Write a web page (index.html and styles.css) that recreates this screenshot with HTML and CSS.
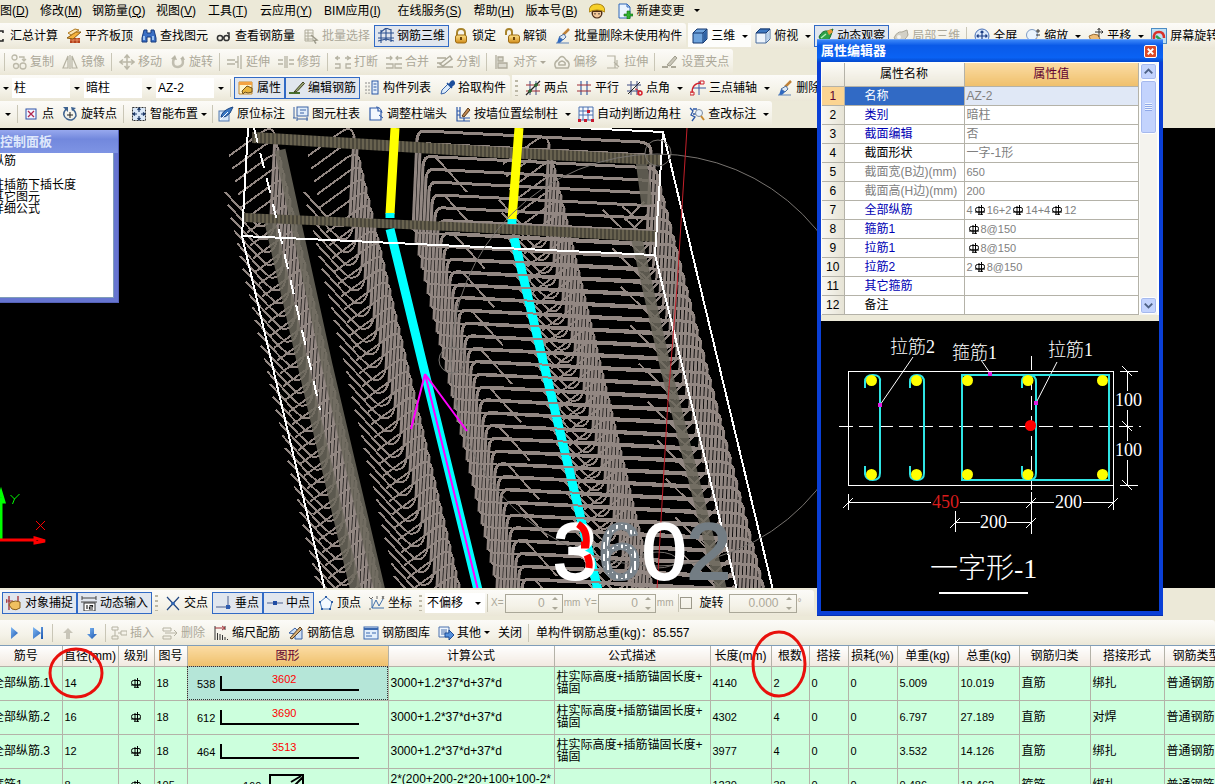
FILE: index.html
```html
<!DOCTYPE html>
<html lang="zh-CN">
<head>
    <meta charset="UTF-8">
    <meta name="viewport" content="width=device-width, initial-scale=1.0">
    <title>钢筋三维</title>
    <link rel="stylesheet" href="styles.css">
</head>
<body>
    <!-- icon sprite -->
    <svg class="sprite" aria-hidden="true">
        <defs>
            <linearGradient id="gold" x1="0" y1="0" x2="0" y2="1"><stop offset="0" stop-color="#ffe48a"/><stop offset="1" stop-color="#d08a18"/></linearGradient>
            <linearGradient id="blue" x1="0" y1="0" x2="1" y2="1"><stop offset="0" stop-color="#7fb8f4"/><stop offset="1" stop-color="#1c57b0"/></linearGradient>
        </defs>
        <symbol id="i-sum" viewBox="0 0 16 16"><path d="M12 5V3H4l4 5-4 5h8v-2" fill="none" stroke="#222" stroke-width="1.5"/></symbol>
        <symbol id="i-slab" viewBox="0 0 16 16"><path d="M4 10h10v5H4z" fill="#b5421c"/><path d="M7 10v5M11 10v5M4 12h10" stroke="#f0a070" stroke-width=".8"/><path d="M1 10l9-6 5 0-8 7z" fill="#f7b23c" stroke="#8a5a10"/><path d="M2 5l7-4 4 1-8 5z" fill="#fbe3b0" stroke="#b07a20"/></symbol>
        <symbol id="i-binoc" viewBox="0 0 16 16"><path d="M3 2h3v3h4V2h3l2 8v4h-5V9H6v5H1v-4z" fill="#3a6fc4" stroke="#163a7c"/><path d="M3 8v4M12 8v4" stroke="#bfe0ff" stroke-width="1.5"/></symbol>
        <symbol id="i-glasses" viewBox="0 0 16 16"><g fill="none" stroke="#333" stroke-width="1.5"><circle cx="4" cy="10" r="2.6"/><circle cx="10.500" cy="10" r="2.600"/><path d="M13 10V5h-2M6.500 9.500h1.500"/></g></symbol>
        <symbol id="i-batch" viewBox="0 0 16 16"><path d="M2 2h8v11H2zM2 5h8M2 8h8M2 11h8M5 2v11" fill="none" stroke="#b0ad9c"/><path d="M8 7l6 5-3 .500 2 3" fill="none" stroke="#9c9989" stroke-width="1.500"/></symbol>
        <symbol id="i-cage" viewBox="0 0 16 16"><path d="M0 5h16M0 10h16M3 2v13M8 0v13M13 1v13M0 13l8-2 8 2M3 4l5-4 5 2" fill="none" stroke="#2a4f8f" stroke-width="1.100"/></symbol>
        <symbol id="i-lock" viewBox="0 0 16 16"><path d="M4 8V5q0-4 4-4t4 4v3" fill="none" stroke="#a8842c" stroke-width="2"/><rect x="2.500" y="7" width="11" height="8" rx="2" fill="url(#gold)" stroke="#9c6a12"/><path d="M8 9v3" stroke="#6a4208" stroke-width="2"/></symbol>
        <symbol id="i-unlock" viewBox="0 0 16 16"><path d="M2 7V4q0-3 3-3t3 3v3" fill="none" stroke="#a8842c" stroke-width="2"/><rect x="4.500" y="7" width="11" height="8" rx="2" fill="url(#gold)" stroke="#9c6a12"/><path d="M10 9v3" stroke="#6a4208" stroke-width="2"/></symbol>
        <symbol id="i-brush" viewBox="0 0 16 16"><path d="M14 1L8 7" stroke="#c08238" stroke-width="2.500"/><path d="M9 6l2 3-3 3-4-3z" fill="#dce8f6" stroke="#50709c"/><path d="M4 9l4 3-3 3H2z" fill="#2f69c0"/><path d="M1 15h13" stroke="#5c83b8"/></symbol>
        <symbol id="i-cube" viewBox="0 0 16 16"><path d="M1 5l4-4h10v10l-4 4H1z" fill="#6fa4dc" stroke="#14376e"/><path d="M1 5h10v10M11 5l4-4" fill="none" stroke="#14376e"/><path d="M11.500 5.500L14.500 2v9l-3 3z" fill="#2f62a4"/></symbol>
        <symbol id="i-cubetop" viewBox="0 0 16 16"><path d="M1 5l4-4h10v10l-4 4H1z" fill="#eef4fb" stroke="#4a6f9f"/><path d="M1 5l4-4h10l-4 4z" fill="#3e78c0" stroke="#14376e"/><path d="M11 5v10" stroke="#4a6f9f"/><path d="M11.500 5.500l3-3v8l-3 3z" fill="#b8d0ea"/></symbol>
        <symbol id="i-orbit" viewBox="0 0 16 16"><path d="M1 9q3-7 9-6l5-2-2 6q-2 7-9 7z" fill="#2da048" stroke="#176c2a"/><path d="M9 3l4-2 2 3-4 3z" fill="#e89538"/><path d="M3 10l5-4" stroke="#b4f0b8" stroke-width="1.500"/></symbol>
        <symbol id="i-orbitoff" viewBox="0 0 16 16"><path d="M1 10q3-7 8-6l5-2 1 5q-3 6-9 7z" fill="#d2d0c6" stroke="#aaa798"/><circle cx="6" cy="9" r="2" fill="#f4f3ee"/></symbol>
        <symbol id="i-full" viewBox="0 0 16 16"><circle cx="8" cy="8" r="7" fill="#dbe8fa" stroke="#4a72b8"/><path d="M8 3v10M3 8h10M6.500 4.500L8 3l1.500 1.500M6.500 11.500L8 13l1.500-1.500M4.500 6.500L3 8l1.500 1.500M11.500 6.500L13 8l-1.500 1.500" fill="none" stroke="#1d3f86" stroke-width="1.200"/></symbol>
        <symbol id="i-zoom" viewBox="0 0 16 16"><circle cx="7" cy="7" r="5.500" fill="#eaf3fc" stroke="#7f9cc4"/><path d="M11 11l4 4" stroke="#c89040" stroke-width="2"/><path d="M11 3h4M13 1v4M11 7h4" stroke="#333"/></symbol>
        <symbol id="i-pan" viewBox="0 0 16 16"><path d="M1 8q5-3 9-1l2 4q-4 4-9 2z" fill="#eebd78" stroke="#9a6a30"/><path d="M11 0v9M7 4h8M9.500 2L11 .500 12.500 2M13.500 2.500L15 4l-1.500 1.500" fill="none" stroke="#333"/></symbol>
        <symbol id="i-screen" viewBox="0 0 16 16"><rect x=".5" y=".5" width="15" height="15" fill="#bfe0f4" stroke="#4c8cc4"/><path d="M3 11q-1-7 5-7 5 0 5 6" fill="none" stroke="#d8322a" stroke-width="2.500"/><path d="M5 8l6 5" stroke="#2ca04c" stroke-width="2.500"/></symbol>
        <symbol id="i-copy" viewBox="0 0 16 16"><g fill="none" stroke="#bcb9a9" stroke-width="1.300"><circle cx="3.500" cy="3.500" r="2.500"/><circle cx="5" cy="12" r="2.500"/><circle cx="12" cy="12" r="3"/><path d="M8 3h5v4M11 5l2 2 2-2"/></g></symbol>
        <symbol id="i-mirror" viewBox="0 0 16 16"><path d="M6 2v12H1zM10 2v12h5zM8 1v14" fill="none" stroke="#b5b2a2" stroke-width="1.200"/></symbol>
        <symbol id="i-move" viewBox="0 0 16 16"><path d="M8 1v14M1 8h14M5.500 4L8 1l2.500 3M5.500 12L8 15l2.500-3M4 5.500L1 8l3 2.500M12 5.500L15 8l-3 2.500" fill="none" stroke="#bab7a7" stroke-width="1.500"/></symbol>
        <symbol id="i-rotate" viewBox="0 0 16 16"><path d="M4 4q-3 9 4 9 7-1 4-9" fill="none" stroke="#c1beb0" stroke-width="2.500"/><path d="M1 5l4-4 2 5zM10 5l3-3 2 4z" fill="#b8b5a6"/></symbol>
        <symbol id="i-extend" viewBox="0 0 16 16"><path d="M0 6h8M0 10h8M11 2v12M14 1v14M8 8h3" stroke="#b5b2a2" stroke-width="1.300"/></symbol>
        <symbol id="i-trim" viewBox="0 0 16 16"><path d="M0 6h5M0 10h5M11 6h5M11 10h5M7 2v12M9 2v12" stroke="#b5b2a2" stroke-width="1.300"/></symbol>
        <symbol id="i-break" viewBox="0 0 16 16"><path d="M0 4h5M10 4h6M3 2L1 4l2 2M12 2l3 2-3 2M0 10h5v4H0M16 10h-5v4h5" fill="none" stroke="#b5b2a2" stroke-width="1.300"/></symbol>
        <symbol id="i-merge" viewBox="0 0 16 16"><path d="M0 4h6M10 4h6M4 2l2 2-2 2M12 2l-2 2 2 2M0 10h7v4H0M16 10H9v4h7" fill="none" stroke="#b5b2a2" stroke-width="1.300"/></symbol>
        <symbol id="i-split" viewBox="0 0 16 16"><path d="M0 4h9M0 13h16M3 10l10-8 2 3-9 7zM0 9h5" fill="none" stroke="#aeab9b" stroke-width="1.500"/></symbol>
        <symbol id="i-align" viewBox="0 0 16 16"><path d="M2 1v14M4 3h5v4H4zM4 9h9v5H4z" fill="#dddbd0" stroke="#aeab9b" stroke-width="1.300"/></symbol>
        <symbol id="i-offset" viewBox="0 0 16 16"><path d="M2 14q-3-5 2-8 4-7 8 0 5 3 2 8zM5 11q-1-3 3-4 4 1 3 4z" fill="none" stroke="#b5b2a2" stroke-width="1.500"/></symbol>
        <symbol id="i-stretch" viewBox="0 0 16 16"><path d="M2 2h8v12H2M13 14H8M12 6v6M9 8l5 5" fill="none" stroke="#b5b2a2" stroke-width="1.200"/></symbol>
        <symbol id="i-grip" viewBox="0 0 16 16"><path d="M0 13h6M9 13h5" stroke="#aaa797" stroke-width="2"/><path d="M5 11l8-9 2 2-7 8z" fill="#c9c6b8" stroke="#a09d8d"/></symbol>
        <symbol id="i-prop" viewBox="0 0 16 16"><path d="M1 2h13v12H1z" fill="#fff5cc" stroke="#c58c30"/><path d="M1 2h13v3H1z" fill="#f4a343"/><path d="M4 11l5-5 5 2v4l-4 1-3-1-2 2z" fill="#e8b43c" stroke="#70501a"/></symbol>
        <symbol id="i-pen" viewBox="0 0 16 16"><path d="M0 13h11" stroke="#4a7030" stroke-width="2"/><path d="M5 12l9-10 1.500 1.500-7.500 8z" fill="#9aa878" stroke="#40401c"/></symbol>
        <symbol id="i-list" viewBox="0 0 16 16"><path d="M2 2v12M5 2v12" stroke="#888" stroke-dasharray="2 1.500"/><rect x="8" y="1" width="6" height="13" fill="#e4eefa" stroke="#2b57a4"/><path d="M9.500 4h3M9.500 7h3M9.500 10h3" stroke="#2b57a4"/></symbol>
        <symbol id="i-dropper" viewBox="0 0 16 16"><path d="M2 14l1-4 6-6 3 3-6 6z" fill="#dcecfc" stroke="#3a64a8"/><path d="M8 3l5 5M10 5l2-3q2-2 3 0t-1 3l-2 2z" fill="#1f509c" stroke="#1f509c" stroke-width="1.500"/></symbol>
        <symbol id="i-twopt" viewBox="0 0 16 16"><path d="M5 1v14M11 1v14" stroke="#3c4a84"/><path d="M1 5h14M1 11h14" stroke="#a02c34"/><path d="M1 15L15 1" stroke="#222" stroke-width="1.200"/><path d="M5 9v4M3 11h4M11 3v4M9 5h4" stroke="#2d6a34" stroke-width="1.500"/></symbol>
        <symbol id="i-parallel" viewBox="0 0 16 16"><path d="M5 1v14M11 1v14" stroke="#3c62a4" stroke-width="1.200"/><path d="M1 5h14M1 11h14" stroke="#a02c34" stroke-width="1.200"/></symbol>
        <symbol id="i-angle" viewBox="0 0 16 16"><path d="M4 1v14M10 1v14M0 5h14M0 11h14" stroke="#3c4a84"/><path d="M1 14L13 2" stroke="#222"/><path d="M8 9q4 0 4 5" fill="none" stroke="#c8202c"/><circle cx="13" cy="13" r="2" fill="none" stroke="#d8202c" stroke-width="1.500"/></symbol>
        <symbol id="i-three" viewBox="0 0 16 16"><path d="M9 1v14M3 8h13" stroke="#3a5aa4"/><path d="M2 13Q2 3 11 3" fill="none" stroke="#d0202c" stroke-width="1.300"/><path d="M0 12h4v3H0zM10 1h4v3h-4z" fill="none" stroke="#d0202c"/></symbol>
        <symbol id="i-point" viewBox="0 0 16 16"><rect x="3" y="3" width="10" height="10" fill="#f5f7ff" stroke="#2c50a8"/><path d="M5 5l6 6M11 5l-6 6" stroke="#b02850" stroke-width="1.300"/></symbol>
        <symbol id="i-rotpt" viewBox="0 0 16 16"><path d="M4 3q-5 6 1 10 6 3 9-3 0-5-4-7" fill="none" stroke="#3d6290" stroke-width="1.500"/><path d="M1 1h5v5zM14 2l-5-1 1 4z" fill="#3d6290"/><path d="M8 6v6M5 9h6" stroke="#222"/></symbol>
        <symbol id="i-smart" viewBox="0 0 16 16"><rect x="1.500" y="1.500" width="13" height="13" fill="#dbe9f8" stroke="#333" stroke-dasharray="2 1"/><path d="M8 2v4M8 10v4M2 8h4M10 8h4M6.500 4L8 2l1.500 2M6.500 12L8 14l1.500-2M4 6.500L2 8l2 1.500M12 6.500L14 8l-2 1.500" fill="none" stroke="#1b3766" stroke-width="1.200"/></symbol>
        <symbol id="i-mark" viewBox="0 0 16 16"><rect x="1" y="5" width="10" height="10" fill="#d7e6f7" stroke="#5078b0"/><path d="M3 11q1-6 9-9l3-1-3 6q-4 5-9 4z" fill="#3a78c4" stroke="#1b4582"/><path d="M2 14l8-8" stroke="#fff"/></symbol>
        <symbol id="i-coltab" viewBox="0 0 16 16"><rect x="4" y="1" width="11" height="9" fill="#e1edfa" stroke="#3a62a4"/><path d="M7 4h6M7 7h4M1 1v11M0 12h3M4 13h11M4 11v4M14 11v4" stroke="#3a62a4"/></symbol>
        <symbol id="i-colend" viewBox="0 0 16 16"><path d="M2 2h8v3h3v9H2z" fill="#f3f7fd" stroke="#2c58a8" stroke-width="1.200"/><path d="M8 1q5 0 6 6M11 9l4 3" fill="none" stroke="#2c58a8"/></symbol>
        <symbol id="i-wall" viewBox="0 0 16 16"><path d="M2 1v14h13M5 1v11h10M2 5h3M2 9h3M9 12v3" fill="none" stroke="#2c58a8" stroke-width="1.200"/><path d="M7 10l6-8 2 2-6 7z" fill="#c08850" stroke="#5a3a18"/></symbol>
        <symbol id="i-corner" viewBox="0 0 16 16"><path d="M1 1h14v13H1zM5 1v13M10 1v13M1 5h14M1 9h14" fill="#f7f9fd" stroke="#4a70b0"/><path d="M0 13h3v3H0zM6 13h3v3H6zM13 13h3v3h-3z" fill="#c8182c"/><path d="M9 4h3v3H9z" fill="#c8182c"/></symbol>
        <symbol id="i-check" viewBox="0 0 16 16"><path d="M1 2l3 3-2 4 4 2-3 4M4 3h4M4 8h3" fill="none" stroke="#2c58a8" stroke-width="1.300"/><circle cx="10" cy="7" r="3.500" fill="#e8f2fc" stroke="#7a8aa0"/><path d="M12 10l3 4" stroke="#c88a30" stroke-width="2"/></symbol>
        <symbol id="i-worker" viewBox="0 0 16 16"><circle cx="8" cy="10" r="5.500" fill="#4c2c18"/><path d="M4 9h8v3q-4 5-8 0z" fill="#f2c79a"/><path d="M0 9q0-8 8-8t8 8q-8-4-16 0z" fill="#f6d028" stroke="#a88012"/><path d="M6 10v1.500M10 10v1.500" stroke="#222"/></symbol>
        <symbol id="i-newdoc" viewBox="0 0 16 16"><path d="M2 1h8l3 3v11H2z" fill="#eaf4ff" stroke="#2f67b8"/><path d="M10 1v3h3" fill="none" stroke="#2f67b8"/><path d="M10 8h3v3h3v2h-3v3h-3v-3H7v-2h3z" fill="#30b030" stroke="#147014" stroke-width=".6"/></symbol>
        <symbol id="i-snap" viewBox="0 0 16 16"><path d="M3 1v14M12 1v5" stroke="#a02c34" stroke-width="1.300"/><path d="M0 6h7M1 4l-1 2 1 2" stroke="#a02c34" fill="none"/><path d="M5 7q5-2 9 0v6q-4 3-8 1l-3-4z" fill="#f0c060" stroke="#8a6020"/></symbol>
        <symbol id="i-dyn" viewBox="0 0 16 16"><path d="M1 1v4M15 1v4M1 3h14M0 7h16" stroke="#444"/><rect x="3" y="8" width="11" height="8" fill="#fff" stroke="#333"/><path d="M6 10v4M8.500 10.500h3v1.500h-3v2h3.500" fill="none" stroke="#222" stroke-width="1.200"/></symbol>
        <symbol id="i-cross" viewBox="0 0 16 16"><path d="M2 2l12 13M14 2L2 15" stroke="#1f4580" stroke-width="1.200"/><circle cx="8" cy="8.500" r="1.800" fill="#2f66b4"/></symbol>
        <symbol id="i-perp" viewBox="0 0 16 16"><path d="M0 12h15M12 1v11" stroke="#4a5f8f"/><rect x="10" y="10" width="4" height="4" fill="#2f5cb0"/></symbol>
        <symbol id="i-mid" viewBox="0 0 16 16"><path d="M0 8h16" stroke="#4a5f8f"/><rect x="6" y="6" width="4" height="4" fill="#1f4ca4"/></symbol>
        <symbol id="i-vertex" viewBox="0 0 16 16"><path d="M8 2l6 5-2 7H4L2 7z" fill="#f4f9ff" stroke="#4a7cbc"/><path d="M7 1h2v2H7zM1 6h2v2H1zM13 6h2v2h-2zM3 13h2v2H3zM11 13h2v2h-2z" fill="#2c5ca4"/></symbol>
        <symbol id="i-coord" viewBox="0 0 16 16"><path d="M3 4v9h12M3 13l4-8 3 6 4-7" fill="none" stroke="#3f70ac"/><path d="M0 2l2 2 2-2M8 1v3M13 1l2 3M15 1l-2 3M0 14h2" stroke="#444" fill="none" stroke-width=".8"/></symbol>
        <symbol id="i-play" viewBox="0 0 16 16"><path d="M5 2v12l7-6z" fill="url(#blue)"/></symbol>
        <symbol id="i-last" viewBox="0 0 16 16"><path d="M3 2v12l8-6zM11 2h2v12h-2z" fill="url(#blue)"/></symbol>
        <symbol id="i-up" viewBox="0 0 16 16"><path d="M8 3l5 5h-3v6H6V8H3z" fill="#c8c5b8"/></symbol>
        <symbol id="i-down" viewBox="0 0 16 16"><path d="M8 14l5-5h-3V3H6v6H3z" fill="url(#blue)"/></symbol>
        <symbol id="i-insert" viewBox="0 0 16 16"><path d="M1 2h6v3H1zM1 11h6v3H1zM4 5v6M7 8h3M10 6h6v4h-6z" fill="none" stroke="#b5b2a2"/></symbol>
        <symbol id="i-remove" viewBox="0 0 16 16"><path d="M1 3h8v3H1zM1 11h8v3H1zM3 8h12M12 5l3 3-3 3" fill="none" stroke="#b5b2a2"/></symbol>
        <symbol id="i-scale" viewBox="0 0 16 16"><path d="M2 1v14M12 1v4" stroke="#333"/><path d="M2 3h9M9 1l3 2-3 2" fill="none" stroke="#a02c34"/><path d="M4.500 8v7M7 9v6M9.500 10v5M12 12v3M14.500 14v1" stroke="#333"/></symbol>
        <symbol id="i-info" viewBox="0 0 16 16"><path d="M1 8l6-5 3 3 4-2v10H7V9z" fill="#cfe0f5" stroke="#3a62a4"/><path d="M2 13L12 2l2 2L4 14z" fill="#d8b078" stroke="#5a4020"/></symbol>
        <symbol id="i-lib" viewBox="0 0 16 16"><rect x="1" y="2" width="14" height="12" fill="#e2eefb" stroke="#3a68b0"/><path d="M1 4h14" stroke="#3a68b0" stroke-width="2"/><path d="M3 8h4M3 11h6M9 8h4" stroke="#3a68b0"/></symbol>
        <symbol id="i-other" viewBox="0 0 16 16"><path d="M1 2h10v10H1zM3 5h6M3 7h6M3 9h4" fill="#eef5fd" stroke="#4a70ac"/><path d="M7 8h4V5l5 5-5 5v-3H7z" fill="#5590dc" stroke="#1f4c94"/></symbol>
        <!-- grade III bar sign -->
        <symbol id="i-bar" viewBox="0 0 10 10"><path d="M2.500 2.500h5.500q1.500 0 1.500 2.200T8 7H2.500Q.5 7 .5 4.700T2.500 2.500zM4 1v8M6.500 0v10M0 7h10M3 9.300h5" fill="none" stroke="currentColor"/></symbol>
    </svg>

    <nav class="menubar">
        <a href="#">图<span class="key">(<u>D</u>)</span></a>
        <a href="#">修改<span class="key">(<u>M</u>)</span></a>
        <a href="#">钢筋量<span class="key">(<u>Q</u>)</span></a>
        <a href="#">视图<span class="key">(<u>V</u>)</span></a>
        <a href="#">工具<span class="key">(<u>T</u>)</span></a>
        <a href="#">云应用<span class="key">(<u>Y</u>)</span></a>
        <a href="#">BIM应用<span class="key">(<u>I</u>)</span></a>
        <a href="#">在线服务<span class="key">(<u>S</u>)</span></a>
        <a href="#">帮助<span class="key">(<u>H</u>)</span></a>
        <a href="#">版本号<span class="key">(<u>B</u>)</span></a>
        <button class="tool" aria-label="用户"><svg><use href="#i-worker"/></svg></button>
        <button class="tool"><svg><use href="#i-newdoc"/></svg>新建变更</button>
        <button class="drop" aria-label="更多"></button>
    </nav>

    <div class="toolbar">
        <div class="group cut">
            <button class="tool"><svg><use href="#i-sum"/></svg>汇总计算</button>
            <button class="tool"><svg><use href="#i-slab"/></svg>平齐板顶</button>
            <button class="tool"><svg><use href="#i-binoc"/></svg>查找图元</button>
            <button class="tool"><svg><use href="#i-glasses"/></svg>查看钢筋量</button>
            <button class="tool" disabled><svg><use href="#i-batch"/></svg>批量选择</button>
            <button class="tool on"><svg><use href="#i-cage"/></svg>钢筋三维</button>
            <button class="tool"><svg><use href="#i-lock"/></svg>锁定</button>
            <button class="tool"><svg><use href="#i-unlock"/></svg>解锁</button>
            <button class="tool"><svg><use href="#i-brush"/></svg>批量删除未使用构件</button>
        </div>
        <div class="group grow">
            <button class="tool lit"><svg><use href="#i-cube"/></svg>三维</button>
            <button class="drop lit" aria-label="三维选项"></button>
            <button class="tool"><svg><use href="#i-cubetop"/></svg>俯视</button>
            <button class="drop" aria-label="俯视选项"></button>
            <button class="tool on"><svg><use href="#i-orbit"/></svg>动态观察</button>
            <button class="tool" disabled><svg><use href="#i-orbitoff"/></svg>局部三维</button>
            <span class="sep"></span>
            <button class="tool"><svg><use href="#i-full"/></svg>全屏</button>
            <button class="tool"><svg><use href="#i-zoom"/></svg>缩放</button>
            <button class="drop" aria-label="缩放选项"></button>
            <button class="tool"><svg><use href="#i-pan"/></svg>平移</button>
            <button class="drop" aria-label="平移选项"></button>
            <button class="tool"><svg><use href="#i-screen"/></svg>屏幕旋转</button>
        </div>
    </div>

    <div class="toolbar">
        <div class="group">
            <span class="sep first"></span>
            <button class="tool" disabled><svg><use href="#i-copy"/></svg>复制</button>
            <button class="tool" disabled><svg><use href="#i-mirror"/></svg>镜像</button>
            <span class="sep"></span>
            <button class="tool" disabled><svg><use href="#i-move"/></svg>移动</button>
            <button class="tool" disabled><svg><use href="#i-rotate"/></svg>旋转</button>
            <span class="sep"></span>
            <button class="tool" disabled><svg><use href="#i-extend"/></svg>延伸</button>
            <button class="tool" disabled><svg><use href="#i-trim"/></svg>修剪</button>
            <span class="sep"></span>
            <button class="tool" disabled><svg><use href="#i-break"/></svg>打断</button>
            <button class="tool" disabled><svg><use href="#i-merge"/></svg>合并</button>
            <button class="tool" disabled><svg><use href="#i-split"/></svg>分割</button>
            <span class="sep"></span>
            <button class="tool caret" disabled><svg><use href="#i-align"/></svg>对齐</button>
            <button class="tool" disabled><svg><use href="#i-offset"/></svg>偏移</button>
            <button class="tool" disabled><svg><use href="#i-stretch"/></svg>拉伸</button>
            <span class="sep"></span>
            <button class="tool" disabled><svg><use href="#i-grip"/></svg>设置夹点</button>
        </div>
    </div>

    <div class="toolbar">
        <div class="group">
            <button class="drop" aria-label="楼层"></button>
            <span class="combo"><select aria-label="构件类别"><option>柱</option></select></span>
            <span class="combo"><select aria-label="构件类型"><option>暗柱</option></select></span>
            <span class="combo"><select aria-label="构件名称"><option>AZ-2</option></select></span>
            <span class="sep"></span>
            <button class="tool on"><svg><use href="#i-prop"/></svg>属性</button>
            <button class="tool on"><svg><use href="#i-pen"/></svg>编辑钢筋</button>
            <button class="tool"><svg><use href="#i-list"/></svg>构件列表</button>
            <button class="tool"><svg><use href="#i-dropper"/></svg>拾取构件</button>
        </div>
        <div class="group">
            <span class="grip"></span>
            <button class="tool"><svg><use href="#i-twopt"/></svg>两点</button>
            <button class="tool"><svg><use href="#i-parallel"/></svg>平行</button>
            <button class="tool"><svg><use href="#i-angle"/></svg>点角</button>
            <button class="drop" aria-label="点角选项"></button>
            <button class="tool"><svg><use href="#i-three"/></svg>三点辅轴</button>
            <button class="drop" aria-label="辅轴选项"></button>
            <button class="tool"><svg><use href="#i-brush"/></svg>删除</button>
        </div>
    </div>

    <div class="toolbar last">
        <div class="group">
            <button class="drop wide" aria-label="选择"></button>
            <span class="sep tight"></span>
            <button class="tool"><svg><use href="#i-point"/></svg>点</button>
            <button class="tool"><svg><use href="#i-rotpt"/></svg>旋转点</button>
            <span class="sep"></span>
            <button class="tool caret"><svg><use href="#i-smart"/></svg>智能布置</button>
            <span class="sep tight"></span>
            <button class="tool"><svg><use href="#i-mark"/></svg>原位标注</button>
            <button class="tool"><svg><use href="#i-coltab"/></svg>图元柱表</button>
            <button class="tool"><svg><use href="#i-colend"/></svg>调整柱端头</button>
            <button class="tool"><svg><use href="#i-wall"/></svg>按墙位置绘制柱</button>
            <button class="drop" aria-label="绘制选项"></button>
            <button class="tool"><svg><use href="#i-corner"/></svg>自动判断边角柱</button>
            <button class="tool"><svg><use href="#i-check"/></svg>查改标注</button>
            <button class="drop" aria-label="标注选项"></button>
        </div>
    </div>

    <main class="view">
        <svg class="scene" viewBox="0 128 1215 460" preserveAspectRatio="xMinYMin slice">
            <defs>
                <pattern id="ribs" width="4" height="12" patternUnits="userSpaceOnUse">
                    <rect width="4" height="12" fill="#68624f"/>
                    <rect width="2" height="12" fill="#4b473b"/>
                </pattern>
                <pattern id="stripes" width="9" height="12" patternUnits="userSpaceOnUse">
                    <rect width="9" height="12" fill="#78828a"/>
                    <path d="M1 2v7M5 0v6M5 9v3" stroke="#fff" stroke-width="2"/>
                </pattern>
            </defs>
            <g id="ties" class="ties"></g>
            <g id="longBars" class="bars"></g>
            <g class="ribbed">
                <path d="M252 132L500 147 660 155V165L500 158 252 143z"/>
                <path d="M244 213L450 222 656 231V242L450 231 244 222z"/>
            </g>
            <g class="main-bars">
                <path class="yellow" d="M395 128L390 214M519 128L512 220"/>
                <path class="cyan" d="M390 213V218M390 229L423 365 478 590M512 219V224M514 238L544 365 598 590"/>
            </g>
            <g id="overTies" class="ties"></g>
            <g class="box">
                <path d="M248 128L242 236 655 255 663 132 560 127M242 236L325 590M655 255L682 365 737 590M663 132L773 590"/>
                <path class="dashed" d="M254 128L272 200 310 365 320 410"/>
            </g>
            <g class="orbit">
                <circle cx="657" cy="360" r="206"/>
                <circle cx="658" cy="153" r="13"/>
                <circle cx="452" cy="360" r="13"/>
                <ellipse cx="657" cy="560" rx="20" ry="8"/>
            </g>
            <path class="axis-line" d="M687 128L677 287 668 400 657 590"/>
            <path class="pick" d="M425 374L411 429M425 374L467 431M425 374L478 590"/>
            <text class="length" x="553" y="579">3<tspan class="hatch">6</tspan>0<tspan class="shade">2</tspan></text>
            <path class="spot" d="M578 524Q588 530 586 545L581 545M587 555Q590 562 589 568"/>
            <g class="ucs">
                <path class="gy" d="M1 540V498M-2 502L1 492 4 502z"/>
                <path class="rx" d="M0 540H36M35 538L45 541 35 543z"/>
                <path class="gt" d="M10.500 495L14.500 499 19.500 494M14.500 499L12.500 504"/>
                <path class="rt" d="M36 521L45 530M45 521L36 530"/>
            </g>
        </svg>
    </main>

    <div class="toolbar snap">
        <div class="group">
            <button class="tool on"><svg><use href="#i-snap"/></svg>对象捕捉</button>
            <button class="tool on"><svg><use href="#i-dyn"/></svg>动态输入</button>
            <span class="grip"></span>
            <button class="tool"><svg><use href="#i-cross"/></svg>交点</button>
            <button class="tool on"><svg><use href="#i-perp"/></svg>垂点</button>
            <button class="tool on"><svg><use href="#i-mid"/></svg>中点</button>
            <button class="tool"><svg><use href="#i-vertex"/></svg>顶点</button>
            <button class="tool"><svg><use href="#i-coord"/></svg>坐标</button>
            <span class="grip"></span>
            <span class="combo small"><select aria-label="偏移方式"><option>不偏移</option></select></span>
            <span class="sep"></span>
            <label class="spin">X=<span class="box-in"><input type="text" value="0" disabled></span>mm</label>
            <label class="spin">Y=<span class="box-in"><input type="text" value="0" disabled></span>mm</label>
            <span class="sep tight"></span>
            <label class="turn"><input type="checkbox">旋转</label>
            <label class="spin"><span class="box-in long"><input type="text" value="0.000" aria-label="旋转角度" disabled></span>°</label>
        </div>
    </div>

    <div class="toolbar edit">
        <div class="group grow">
            <button class="tool" aria-label="下一个"><svg><use href="#i-play"/></svg></button>
            <button class="tool" aria-label="最后"><svg><use href="#i-last"/></svg></button>
            <span class="sep"></span>
            <button class="tool" aria-label="上移" disabled><svg><use href="#i-up"/></svg></button>
            <button class="tool" aria-label="下移"><svg><use href="#i-down"/></svg></button>
            <span class="sep tight"></span>
            <button class="tool" disabled><svg><use href="#i-insert"/></svg>插入</button>
            <button class="tool" disabled><svg><use href="#i-remove"/></svg>删除</button>
            <button class="tool"><svg><use href="#i-scale"/></svg>缩尺配筋</button>
            <button class="tool"><svg><use href="#i-info"/></svg>钢筋信息</button>
            <button class="tool"><svg><use href="#i-lib"/></svg>钢筋图库</button>
            <button class="tool caret"><svg><use href="#i-other"/></svg>其他</button>
            <button class="tool">关闭</button>
            <span class="sep"></span>
            <span class="total">单构件钢筋总重(kg)：85.557</span>
        </div>
    </div>

    <section class="grid">
        <table class="bars-table">
            <colgroup>
                <col class="c72"><col class="c56"><col class="c36"><col class="c33"><col class="c201"><col class="c166"><col class="c156"><col class="c61"><col class="c38"><col class="c39"><col class="c49"><col class="c61"><col class="c61"><col class="c71"><col class="c74"><col>
            </colgroup>
            <thead>
                <tr>
                    <th>筋号</th><th>直径(mm)</th><th>级别</th><th>图号</th><th class="hot">图形</th><th>计算公式</th><th>公式描述</th><th>长度(mm)</th><th>根数</th><th>搭接</th><th>损耗(%)</th><th>单重(kg)</th><th>总重(kg)</th><th>钢筋归类</th><th>搭接形式</th><th>钢筋类型</th>
                </tr>
            </thead>
            <tbody>
                <tr>
                    <td>全部纵筋.1</td><td class="n dia">14</td><td class="mid"><svg class="bar"><use href="#i-bar"/></svg></td><td class="n">18</td>
                    <td class="picked"><svg class="shape" viewBox="0 0 200 33"><text x="9" y="21">538</text><path d="M33 9V23H171"/><text class="len" x="84" y="16">3602</text></svg></td>
                    <td>3000+1.2*37*d+37*d</td><td>柱实际高度+插筋锚固长度+<br>锚固</td><td class="n">4140</td><td class="n">2</td><td class="n">0</td><td class="n">0</td><td class="n">5.009</td><td class="n">10.019</td><td>直筋</td><td>绑扎</td><td>普通钢筋</td>
                </tr>
                <tr>
                    <td>全部纵筋.2</td><td class="n dia">16</td><td class="mid"><svg class="bar"><use href="#i-bar"/></svg></td><td class="n">18</td>
                    <td><svg class="shape" viewBox="0 0 200 33"><text x="9" y="21">612</text><path d="M33 9V23H171"/><text class="len" x="84" y="16">3690</text></svg></td>
                    <td>3000+1.2*37*d+37*d</td><td>柱实际高度+插筋锚固长度+<br>锚固</td><td class="n">4302</td><td class="n">4</td><td class="n">0</td><td class="n">0</td><td class="n">6.797</td><td class="n">27.189</td><td>直筋</td><td>对焊</td><td>普通钢筋</td>
                </tr>
                <tr>
                    <td>全部纵筋.3</td><td class="n dia">12</td><td class="mid"><svg class="bar"><use href="#i-bar"/></svg></td><td class="n">18</td>
                    <td><svg class="shape" viewBox="0 0 200 33"><text x="9" y="21">464</text><path d="M33 9V23H171"/><text class="len" x="84" y="16">3513</text></svg></td>
                    <td>3000+1.2*37*d+37*d</td><td>柱实际高度+插筋锚固长度+<br>锚固</td><td class="n">3977</td><td class="n">4</td><td class="n">0</td><td class="n">0</td><td class="n">3.532</td><td class="n">14.126</td><td>直筋</td><td>绑扎</td><td>普通钢筋</td>
                </tr>
                <tr>
                    <td>箍筋1</td><td class="n dia">8</td><td class="mid"><svg class="bar"><use href="#i-bar"/></svg></td><td class="n">105</td>
                    <td><svg class="shape" viewBox="0 0 200 33"><text x="55" y="21">160</text><path d="M82 27V6H115V27H82M103 13L113 7M106 17L115 8"/></svg></td>
                    <td>2*(200+200-2*20+100+100-2*<br>20)+2*(11.9*d)</td><td></td><td class="n">1230</td><td class="n">38</td><td class="n">0</td><td class="n">0</td><td class="n">0.486</td><td class="n">18.462</td><td>箍筋</td><td>绑扎</td><td>普通钢筋</td>
                </tr>
            </tbody>
        </table>
    </section>

    <!-- red call-outs over the grid -->
    <svg class="ring ring-dia"><ellipse cx="28" cy="26" rx="26" ry="24"/></svg>
    <svg class="ring ring-count"><ellipse cx="28" cy="34" rx="26" ry="32"/></svg>

    <aside class="window panel">
        <h2>控制面板</h2>
        <ul>
            <li>纵筋</li>
            <li>&nbsp;</li>
            <li>柱插筋下插长度</li>
            <li>其它图元</li>
            <li>详细公式</li>
        </ul>
    </aside>

    <aside class="window editor">
        <header>
            <h2>属性编辑器</h2>
            <button class="close" aria-label="关闭"><svg viewBox="0 0 12 12"><path d="M3 3l6 6M9 3l-6 6"/></svg></button>
        </header>
        <div class="props">
            <table>
                <thead><tr><th class="no"></th><th class="name">属性名称</th><th class="hot">属性值</th></tr></thead>
                <tbody>
                    <tr class="sel"><th>1</th><td>名称</td><td>AZ-2</td></tr>
                    <tr class="link"><th>2</th><td>类别</td><td>暗柱</td></tr>
                    <tr class="link"><th>3</th><td>截面编辑</td><td>否</td></tr>
                    <tr><th>4</th><td>截面形状</td><td>一字-1形</td></tr>
                    <tr class="off"><th>5</th><td>截面宽(B边)(mm)</td><td class="n">650</td></tr>
                    <tr class="off"><th>6</th><td>截面高(H边)(mm)</td><td class="n">200</td></tr>
                    <tr class="link"><th>7</th><td>全部纵筋</td><td class="n">4<svg class="bar"><use href="#i-bar"/></svg>16+2<svg class="bar"><use href="#i-bar"/></svg>14+4<svg class="bar"><use href="#i-bar"/></svg>12</td></tr>
                    <tr class="link"><th>8</th><td>箍筋1</td><td class="n"><svg class="bar"><use href="#i-bar"/></svg>8@150</td></tr>
                    <tr class="link"><th>9</th><td>拉筋1</td><td class="n"><svg class="bar"><use href="#i-bar"/></svg>8@150</td></tr>
                    <tr class="link"><th>10</th><td>拉筋2</td><td class="n">2<svg class="bar"><use href="#i-bar"/></svg>8@150</td></tr>
                    <tr class="link"><th>11</th><td>其它箍筋</td><td></td></tr>
                    <tr><th>12</th><td>备注</td><td></td></tr>
                </tbody>
            </table>
            <div class="scroll">
                <button aria-label="向上"><svg viewBox="0 0 16 16"><path d="M4 10l4-4 4 4"/></svg></button>
                <span class="thumb"></span>
                <button aria-label="向下"><svg viewBox="0 0 16 16"><path d="M4 6l4 4 4-4"/></svg></button>
            </div>
        </div>
        <svg class="section" viewBox="821 321 338 290">
            <g class="white">
                <rect x="848.5" y="371.5" width="265" height="114"/>
                <path class="dash" d="M839 426.500H1141M1031.500 356V494"/>
                <path d="M913 357L880 405M981 360L990 373M1057 362L1036 403"/>
                <path d="M848.500 502.500H931M960 502.500H1054M1083 502.500H1113.500M848.500 494V510M1031.500 492V534M1113.500 486V510M955.500 511V532M955.500 522.500H980M1007 522.500H1031.500"/>
                <path d="M843 508L853 498M1026 508L1036 498M1108 508L1118 498M950 528L960 518M1026 528L1036 518"/>
                <path d="M1127.500 371V391M1127.500 410V441M1127.500 460V486M1120 371.500H1138M1120 485.500H1138M1122 366L1132 376M1122 421L1132 431M1122 480L1132 490"/>
                <path class="thick" d="M939 593H1028"/>
            </g>
            <g class="cy">
                <rect x="962" y="375" width="147" height="105"/>
                <path d="M865 388V382Q865 375 873 375T880 382V473Q880 480 873 480T865 474V466"/>
                <path d="M910 388V382Q910 375 917 375T924 382V473Q924 480 917 480T910 474V466"/>
                <path d="M1022 388V382Q1022 375 1029 375T1036 382V473Q1036 480 1029 480T1022 474V466"/>
            </g>
            <g class="dots">
                <circle cx="871.5" cy="380.500" r="5.500"/><circle cx="916.500" cy="380.500" r="5.500"/><circle cx="967.500" cy="380.500" r="5.500"/><circle cx="1028" cy="380.500" r="5.500"/><circle cx="1102.500" cy="380.500" r="5.500"/>
                <circle cx="871.500" cy="474.500" r="5.500"/><circle cx="916.500" cy="474.500" r="5.500"/><circle cx="967.500" cy="474.500" r="5.500"/><circle cx="1028" cy="474.500" r="5.500"/><circle cx="1102.500" cy="474.500" r="5.500"/>
                <circle class="red" cx="1030.500" cy="425.500" r="5.500"/>
                <path class="mag" d="M878 405h4M988 374h4M1034 403h4"/>
            </g>
            <g class="note">
                <text x="890" y="353">拉筋2</text><text x="952" y="359">箍筋1</text><text x="1048" y="356">拉筋1</text>
                <text x="1115" y="406">100</text><text x="1115" y="456">100</text>
                <text class="red" x="932" y="508">450</text><text x="1055" y="508">200</text><text x="980" y="528">200</text>
                <text class="big" x="930" y="578">一字形-1</text>
            </g>
        </svg>
    </aside>

    <script src="scene.js"></script>
</body>
</html>
```

FILE: styles.css
```css
:root {
    --face: #ece9d8;
    --line: #b4b2a8;
    --row: #ccffdd;
    --hot: linear-gradient(#fbdca4, #efc06c);
    --bar: linear-gradient(#fcfbf8, #f4f2e8 60%, #ebe7d7);
    --accent: #316ac5;
    --muted: #aca899;
}
* {
    box-sizing: border-box;
}
body {
    margin: 0;
    height: 100vh;
    display: flex;
    flex-direction: column;
    position: relative;
    overflow: hidden;
    background: var(--face);
    color: #000;
    font: 12px/16px "Liberation Sans", "Noto Sans CJK SC", sans-serif;
}
button, input, select {
    font: inherit;
    color: inherit;
    border: 0;
    padding: 0;
    margin: 0;
    background: transparent;
}
.sprite {
    position: absolute;
    width: 0;
    height: 0;
}

/* menu and toolbars */
.menubar {
    display: flex;
    align-items: center;
    gap: 12px;
    height: 23px;
    flex: none;
    padding-bottom: 2px;
    white-space: nowrap;
}
.menubar a {
    color: #000;
    text-decoration: none;
}
.menubar .key {
    display: inline-block;
    width: 16px;
}
.menubar .tool {
    margin-left: -4px;
    margin-right: -4px;
}
.menubar .drop {
    margin-left: -6px;
}
.toolbar {
    display: flex;
    flex: none;
    gap: 2px;
    height: 26px;
    overflow: hidden;
    white-space: nowrap;
}
.toolbar.last {
    height: 27px;
    padding-bottom: 1px;
}
.group {
    display: flex;
    align-items: center;
    flex: none;
    border-radius: 0 3px 3px 0;
    background: var(--bar);
}
.group.grow {
    flex: 1 0 auto;
}
.group.cut {
    margin-left: -13px;
}
.tool {
    display: inline-flex;
    align-items: center;
    gap: 3px;
    height: 22px;
    padding: 0 3px;
    border: 1px solid transparent;
}
.tool svg {
    width: 16px;
    height: 16px;
}
.tool.on {
    border-color: var(--accent);
    background: #e1e6ee;
}
.tool.lit, .drop.lit {
    background: #fdfdfb;
}
.tool:disabled {
    color: var(--muted);
}
.drop {
    width: 12px;
    height: 22px;
}
.drop.wide {
    width: 16px;
}
.drop::before, .tool.caret::after, .combo::after {
    content: "";
    display: block;
    width: 0;
    margin: 0 auto;
    border: 3px solid transparent;
    border-top-color: currentColor;
    border-bottom: 0;
}
.sep {
    width: 1px;
    height: 18px;
    margin: 0 3px 0 2px;
    background: #c9c6b6;
}
.sep.first {
    margin-left: 4px;
    margin-right: 2px;
}
.sep.tight {
    margin: 0 1px;
}
.grip {
    width: 3px;
    height: 16px;
    margin: 0 3px;
    background: repeating-linear-gradient(#bcb8a6 0 2px, transparent 2px 5px);
}
.combo {
    display: flex;
    align-items: center;
    width: 72px;
    height: 20px;
}
.combo select {
    appearance: none;
    width: 58px;
    height: 20px;
    padding-left: 2px;
    background: #fff;
}
.combo.small {
    width: 60px;
    background: #fff;
}
.combo.small select {
    width: 46px;
}

/* snap and edit bars */
.snap {
    height: 30px;
    padding: 2px 0 2px 0;
}
.snap .group {
    padding-left: 2px;
    padding-right: 8px;
}
.spin {
    display: flex;
    align-items: center;
    gap: 1px;
    margin-right: 4px;
    font-size: 10px;
    color: var(--muted);
}
.box-in {
    position: relative;
    width: 58px;
    height: 19px;
    border: 1px solid #aaa798;
}
.box-in.long {
    width: 68px;
}
.box-in input {
    display: block;
    width: 100%;
    height: 17px;
    padding-right: 17px;
    text-align: right;
    font-size: 12px;
    color: var(--muted);
}
.box-in::before, .box-in::after {
    content: "";
    position: absolute;
    right: 4px;
    border: 3px solid transparent;
}
.box-in::before {
    top: 2px;
    border-top: 0;
    border-bottom-color: #aaa798;
}
.box-in::after {
    bottom: 2px;
    border-bottom: 0;
    border-top-color: #aaa798;
}
.turn {
    display: flex;
    align-items: center;
    gap: 7px;
    margin-right: 5px;
}
.turn input {
    appearance: none;
    width: 12px;
    height: 12px;
    border: 1px solid #9c998a;
}
.edit {
    height: 27px;
    padding-top: 2px;
}
.edit .group {
    padding-left: 2px;
}
.total {
    padding-left: 4px;
}

/* 3D view */
.view {
    flex: 1;
    min-height: 0;
    background: #000;
    overflow: hidden;
}
.scene {
    display: block;
    width: 100%;
    height: 100%;
}
.scene path, .orbit * {
    fill: none;
}
.ties path {
    stroke: #928782;
    stroke-width: 2;
    shape-rendering: crispEdges;
}
.ties .leg {
    stroke-width: 3;
    shape-rendering: auto;
}
.ties .span {
    stroke-width: 3;
}
.bars path {
    stroke: #6c685d;
    stroke-width: 11;
    stroke-opacity: .85;
}
.scene .ribbed path {
    fill: url(#ribs);
}
.main-bars path {
    stroke-width: 9;
}
.yellow {
    stroke: #ff0;
}
.cyan {
    stroke: #0ff;
}
.box path {
    stroke: #fff;
    stroke-width: 2;
    shape-rendering: crispEdges;
}
.box .dashed {
    stroke-dasharray: 15 11;
}
.orbit {
    stroke: #77736f;
}
.axis-line {
    stroke: #c4202a;
}
.pick {
    stroke: #f0f;
    stroke-width: 2;
}
.length {
    font-size: 80px;
    fill: #fff;
    stroke: #fff;
    stroke-width: 2;
}
.length .hatch {
    fill: url(#stripes);
    stroke: #78828a;
}
.length .shade {
    fill: #737d84;
    stroke: #737d84;
}
.spot {
    stroke: red;
    stroke-width: 7;
}
.ucs .gy {
    stroke: #0f0;
    stroke-width: 3;
}
.ucs .rx {
    stroke: red;
    stroke-width: 3;
}
.ucs .gt {
    stroke: #0f0;
}
.ucs .rt {
    stroke: red;
}

/* bar grid */
.grid {
    flex: none;
    height: 139px;
    overflow: hidden;
    border-top: 1px solid #7f9db9;
}
table {
    border-collapse: collapse;
    table-layout: fixed;
}
th {
    font-weight: normal;
}
.bars-table {
    width: calc(100% + 32px);
    margin-left: -10px;
    background: var(--row);
    line-height: 12px;
}
.bars-table th, .bars-table td {
    border-right: 1px solid var(--line);
    border-bottom: 1px solid var(--line);
    padding: 0 2px;
    overflow: hidden;
    white-space: nowrap;
}
.bars-table th {
    height: 20px;
    padding: 0;
    line-height: 16px;
    background: linear-gradient(#fff, #f1e9e0);
}
.bars-table th:last-child {
    padding-left: 8px;
    text-align: left;
}
.bars-table td {
    height: 34px;
    text-align: left;
}
.bars-table th.hot, .props th.hot {
    background: var(--hot);
    color: #600030;
}
.bars-table td.n {
    font-size: 11px;
}
.bars-table td.dia {
    border-left: 1px solid #000;
}
.bars-table td.mid {
    text-align: center;
}
.bars-table td:nth-child(5) {
    padding: 0;
}
.bars-table td.picked {
    background: #b5e6d8;
    outline: 1px dotted #333;
    outline-offset: -1px;
}
.c72 { width: 72px; }
.c56 { width: 56px; }
.c36 { width: 36px; }
.c33 { width: 33px; }
.c201 { width: 201px; }
.c166 { width: 166px; }
.c156 { width: 156px; }
.c61 { width: 61px; }
.c38 { width: 38px; }
.c39 { width: 39px; }
.c49 { width: 49px; }
.c71 { width: 71px; }
.c74 { width: 74px; }
.shape {
    display: block;
    width: 200px;
    height: 33px;
    font-size: 11px;
}
.shape path {
    fill: none;
    stroke: #000;
    stroke-width: 2;
}
.shape .len {
    fill: red;
}
.bar {
    width: 10px;
    height: 10px;
    margin: 0 2px;
    color: #000;
    vertical-align: -1px;
}
.ring {
    position: absolute;
    fill: none;
    stroke: #e8100c;
    stroke-width: 3;
    overflow: visible;
    pointer-events: none;
}
.ring-dia {
    left: 48px;
    top: 647px;
    width: 56px;
    height: 52px;
}
.ring-count {
    left: 751px;
    top: 630px;
    width: 56px;
    height: 68px;
}

/* floating windows */
.window {
    position: absolute;
}
.window h2 {
    margin: 0;
    font-size: 13px;
    line-height: 22px;
    color: #fff;
}
.panel {
    left: 0;
    top: 130px;
    width: 119px;
    height: 173px;
    padding-right: 4px;
    padding-bottom: 4px;
    display: flex;
    flex-direction: column;
    background: #6675d0;
    border-right: 1px solid #5561b8;
    border-bottom: 1px solid #5561b8;
}
.window.panel h2 {
    margin-right: -4px;
    background: linear-gradient(#97a8ee, #7288dd 40%, #7e94e4);
    color: #dfe8fb;
    line-height: 23px;
}
.panel ul {
    flex: 1;
    margin: 0;
    padding: 2px 0 0;
    list-style: none;
    line-height: 12px;
    background: #fff;
    border-bottom: 1px solid #7f9db9;
    border-right: 1px solid #7f9db9;
    overflow: hidden;
}
.panel li {
    margin-left: -8px;
    white-space: nowrap;
}
.editor {
    left: 817px;
    top: 39px;
    width: 346px;
    padding: 0 4px 4px;
    background: #0a3fd6;
    border: 1px solid #0831b0;
    border-top-color: #6ba0f8;
    border-left-width: 0;
    border-right-width: 0;
}
.editor header {
    display: flex;
    align-items: center;
    justify-content: space-between;
    height: 22px;
    margin: 0 -4px;
    padding: 0 6px 0 4px;
    background: linear-gradient(#3a86f8, #0a5ae8 25%, #0a62f4 80%, #0448cc);
}
.close {
    width: 13px;
    height: 13px;
    border: 1px solid #fff;
    border-radius: 2px;
    background: #dc4a28;
}
.close svg {
    display: block;
    stroke: #fff;
    stroke-width: 2;
}
.props {
    display: flex;
    justify-content: space-between;
    height: 259px;
    padding: 1px 2px 0 1px;
    background: #fdfdfa;
    border-bottom: 6px solid var(--face);
}
.props table {
    width: 317px;
    height: 251px;
    background: #fff;
}
.props th, .props td {
    height: 19px;
    line-height: 16px;
    border: 1px solid var(--line);
    border-left: 0;
    padding: 0 2px;
    white-space: nowrap;
}
.props thead th {
    height: 23px;
    border-top: 0;
    background: linear-gradient(#fcfbf7, #ebe7d9);
}
.props .no {
    width: 22px;
}
.props .name {
    width: 120px;
}
.props tbody th {
    background: linear-gradient(90deg, #f8f7f2, #e6e3d5);
}
.props td:nth-child(2) {
    padding-left: 20px;
}
.props td:nth-child(3) {
    color: #808080;
}
.props td.n {
    font-size: 11px;
}
.props .link td:nth-child(2) {
    color: #0000b4;
}
.props .off td {
    color: #808080;
}
.props .sel th {
    background: #fbd492;
    color: #600030;
}
.props .sel td:nth-child(2) {
    background: var(--accent);
    color: #fff;
}
.props .sel td:nth-child(3) {
    background: #e0e8f6;
}
.scroll {
    display: flex;
    flex-direction: column;
    width: 17px;
    background: #f4f3ee;
}
.scroll button, .scroll .thumb {
    height: 17px;
    border: 1px solid #fff;
    border-radius: 3px;
    background: #c3d3fd;
    box-shadow: inset 0 0 0 1px #a5b9ee;
}
.scroll button:last-child {
    margin-top: auto;
    margin-bottom: 1px;
}
.scroll svg {
    display: block;
    fill: none;
    stroke: #4d6185;
    stroke-width: 2;
}
.scroll .thumb {
    display: flex;
    height: 54px;
}
.thumb::before {
    content: "";
    width: 7px;
    height: 8px;
    margin: auto;
    background: repeating-linear-gradient(#eef4fe 0 1px, #8fa8e8 1px 2px);
}

/* section preview */
.section {
    display: block;
    width: 100%;
    background: #000;
}
.section path, .section rect {
    fill: none;
}
.white {
    stroke: #fff;
}
.white .dash {
    stroke-dasharray: 14 6;
}
.white .thick {
    stroke-width: 2;
}
.cy {
    stroke: #2fe4e4;
    stroke-width: 2;
}
.dots {
    fill: #ff0;
}
.dots .red {
    fill: red;
}
.dots .mag {
    stroke: #e020e0;
    stroke-width: 4;
}
.note {
    font-family: "Liberation Serif", "Noto Sans CJK SC", serif;
    font-size: 18px;
    font-weight: 300;
    fill: #fff;
}
.note .red {
    fill: #d81c1c;
}
.note .big {
    font-size: 28px;
}
```

FILE: scene.js
```js
const NS = 'http://www.w3.org/2000/svg';

function draw(groupId, d, cls) {
    const path = document.createElementNS(NS, 'path');
    path.setAttribute('d', d);
    if (cls) path.setAttribute('class', cls);
    document.getElementById(groupId).appendChild(path);
}

// each level sits one spacing lower than the one before
const STEP_X = 3;
const STEP_Y = 12.8;
const LEVELS = 37;

// long bars
draw('longBars', 'M270 222L303 365 358 600');
draw('longBars', 'M280 150L327 365 382 600');
draw('longBars', 'M641 160L647 205M637 240L665 365 724 600');

// single tie, x/y is the top of the long leg
function tie(x, y) {
    draw('ties', `M${x - 45} ${y + 26}L${x - 12} ${y + 2}Q${x} ${y - 6} ${x + 1} ${y + 8}`);
    draw('ties', `M${x + 1} ${y + 6}L${x - 3} ${y + 86}`, 'leg');
    draw('ties', `M${x - 3} ${y + 84}Q${x - 6} ${y + 99} ${x - 16} ${y + 96}L${x - 26} ${y + 87} ${x - 49} ${y + 62}`);
}

// closed stirrup round the column core
function stirrup(x, y, k) {
    const l = 417 + x;
    const r = 651 + x + k * 0.3;
    draw('ties', `M${l} ${140 + y}Q${l + 1} ${131 + y} ${l + 7} ${131 + y}L${r - 11} ${142 + y}Q${r} ${143 + y} ${r} ${152 + y}`, 'span');
    draw('ties', `M${l} ${138 + y}L${l - 4} ${230 + y}`, 'leg');
    draw('ties', `M${r} ${150 + y}L${r - 4} ${240 + y}`, 'leg');
    draw('ties', `M${l - 4} ${228 + y}Q${l - 3} ${233 + y} ${l + 5} ${233 + y}L${r - 12} ${245 + y}Q${r - 5} ${246 + y} ${r - 4} ${238 + y}`);
    if (k % 3 === 0) {
        draw('ties', `M${424 + x} ${160 + y}Q${432 + x} ${152 + y} ${440 + x} ${162 + y}L${467 + x} ${192 + y}`);
        draw('ties', `M${603 + x} ${210 + y}L${640 + x} ${246 + y}`);
    }
    draw('ties', `M${622 + x} ${206 + y}L${638 + x} ${220 + y}M${626 + x} ${220 + y}L${644 + x} ${202 + y}`);
}

for (let k = 0; k < LEVELS; k++) {
    const x = k * STEP_X;
    const y = k * STEP_Y;
    stirrup(x, y, k);
    tie(274 + x, 130 + y);
    tie(353 + x, 130 + y);
    tie(548 + x, 138 + y);
}

// spans that pass in front of the second main bar
for (let k = 0; k < LEVELS; k++) {
    const x = 506 + k * STEP_X;
    const y = 236 + k * STEP_Y;
    draw('overTies', `M${x - 2} ${y}L${x + 14} ${y + 1}`);
}
```
